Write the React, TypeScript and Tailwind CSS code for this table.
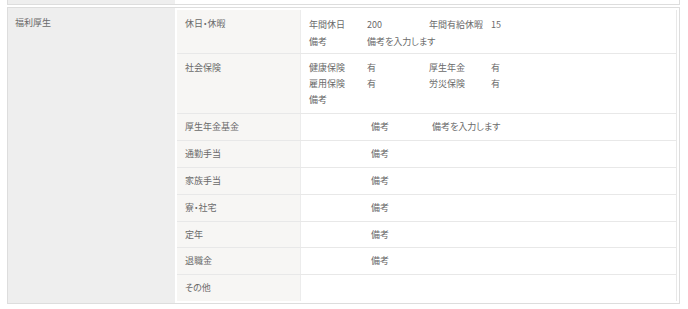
const font = { fontFamily: '"Noto Sans CJK JP", "Noto Sans", sans-serif' }

type Row = { label: string; note?: string; h: string; empty?: boolean }

const simpleRows: Row[] = [
  { label: '厚生年金基金', note: '備考を入力します', h: 'h-[27px]' },
  { label: '通勤手当', h: 'h-[27px]' },
  { label: '家族手当', h: 'h-[27px]' },
  { label: '寮・社宅', h: 'h-[27px]' },
  { label: '定年', h: 'h-[26px]' },
  { label: '退職金', h: 'h-[27px]' },
  { label: 'その他', h: 'h-[26px]', empty: true },
]

function SubRow({
  label,
  children,
  h,
  pt,
  last,
}: {
  label: string
  children?: React.ReactNode
  h: string
  pt: string
  last?: boolean
}) {
  return (
    <div className={`flex box-border ${h} ${last ? '' : 'border-b border-[#e8e8e8]'}`}>
      <div className={`w-[124px] shrink-0 border-r border-[#ececec] bg-[#f7f6f4] px-[8px] leading-[16px] ${pt}`}>
        {label}
      </div>
      <div className={`flex-1 pl-[8px] leading-[16px] ${pt}`}>{children}</div>
    </div>
  )
}

export default function App() {
  return (
    <div
      className="min-h-[309px] bg-white pl-[7px] pr-[8px] text-[9px] text-[#6a6a6a] [font-feature-settings:'palt']"
      style={font}
    >
      <div className="flex h-[5px] border-x border-b border-[#ddd]">
        <div className="w-[167px] bg-[#eee]" />
        <div className="flex-1 bg-white" />
      </div>

      <div className="mt-[2px] flex border border-[#ddd]">
        <div className="w-[167px] shrink-0 bg-[#eee] px-[7px] pt-[7px] leading-[16px]">福利厚生</div>
        <div className="flex-1 bg-white p-[2px]">
          <div className="border-r border-[#e8e8e8]">
            <SubRow label="休日・休暇" h="h-[44px]" pt="pt-[6px]">
              <div className="flex leading-[17px]">
                <span className="w-[58px]">年間休日</span>
                <span className="w-[62px]">200</span>
                <span className="w-[62px]">年間有給休暇</span>
                <span>15</span>
              </div>
              <div className="flex leading-[17px]">
                <span className="w-[58px]">備考</span>
                <span>備考を入力します</span>
              </div>
            </SubRow>
            <SubRow label="社会保険" h="h-[60px]" pt="pt-[6px]">
              <div className="flex">
                <span className="w-[58px]">健康保険</span>
                <span className="w-[62px]">有</span>
                <span className="w-[62px]">厚生年金</span>
                <span>有</span>
              </div>
              <div className="flex">
                <span className="w-[58px]">雇用保険</span>
                <span className="w-[62px]">有</span>
                <span className="w-[62px]">労災保険</span>
                <span>有</span>
              </div>
              <div>備考</div>
            </SubRow>
            {simpleRows.map((r, i) => (
              <SubRow key={r.label} label={r.label} h={r.h} pt="pt-[5px]" last={i === simpleRows.length - 1}>
                {r.empty ? null : (
                  <div className="flex">
                    <span className="w-[62px]" />
                    <span className="w-[61px]">備考</span>
                    <span>{r.note ?? ''}</span>
                  </div>
                )}
              </SubRow>
            ))}
          </div>
        </div>
      </div>
    </div>
  )
}
